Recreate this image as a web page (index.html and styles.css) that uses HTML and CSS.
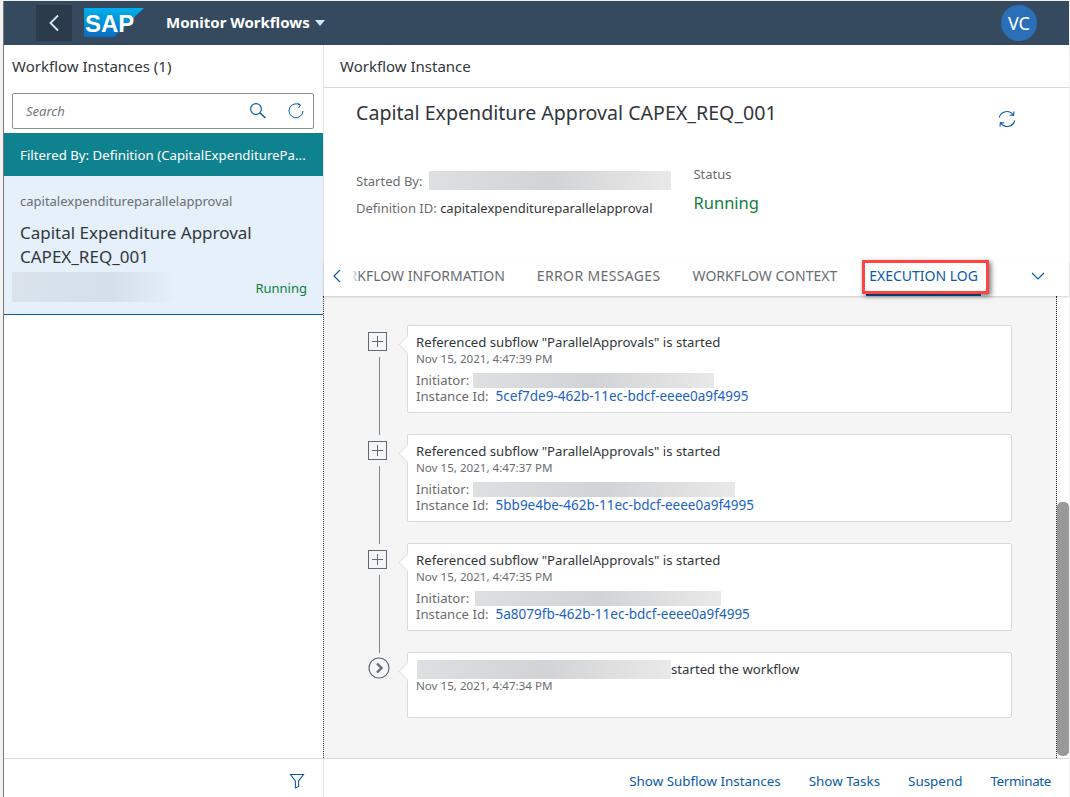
FILE: index.html
```html
<!DOCTYPE html>
<html>
<head lang="en">
    <meta charset="UTF-8">
    <title>Monitor Workflows</title>
    <link rel="stylesheet" href="styles.css">
</head>
<body>
<div id="app">
    <header class="shell">
        <div class="back">
            <svg width="12" height="18" viewBox="0 0 12 18"><path d="M10 1.5 2.5 9l7.5 7.5" fill="none" stroke="#d1e8ff" stroke-width="1.8"/></svg>
        </div>
        <svg class="logo" width="60" height="30" viewBox="0 0 60 30">
            <defs><linearGradient id="sapblue" x1="0" y1="0" x2="0" y2="1"><stop offset="0" stop-color="#00b1eb"/><stop offset="1" stop-color="#0a6cc0"/></linearGradient></defs>
            <polygon points="0,0 60,0 30,29 0,29" fill="url(#sapblue)"/>
            <text x="1" y="24" class="logo-text">SAP</text>
        </svg>
        <div class="shell-title">Monitor Workflows</div>
        <div class="caret"></div>
        <div class="avatar">VC</div>
    </header>
    <div class="main">
        <aside class="master">
            <div class="pane-title">Workflow Instances (1)</div>
            <div class="search">
                <span class="search-text">Search</span>
                <svg width="18" height="18" viewBox="0 0 18 18"><circle cx="7" cy="7" r="5.4" fill="none" stroke="#0a5ba8" stroke-width="1.2"/><path d="M11 11l5.5 5" fill="none" stroke="#0a5ba8" stroke-width="1.6"/></svg>
                <svg width="18" height="18" viewBox="0 0 18 18"><path d="M13.2 3.2A7 7 0 1 0 16 9" fill="none" stroke="#0a5ba8" stroke-width="1"/><path d="M10.5 1 13.6 3.2 11.4 6" fill="none" stroke="#0a5ba8" stroke-width="1"/></svg>
            </div>
            <div class="filter-bar"><span>Filtered By: Definition (CapitalExpenditurePa...</span></div>
            <div class="item">
                <div class="item-def">capitalexpenditureparallelapproval</div>
                <div class="item-name">Capital Expenditure Approval CAPEX_REQ_001</div>
                <div class="item-foot">
                    <div class="blur blur-item"></div>
                    <div class="running-sm">Running</div>
                </div>
            </div>
            <div class="spacer"></div>
            <div class="master-foot">
                <svg width="16" height="16" viewBox="0 0 16 16"><path d="M1.5 1.5h13L9.6 8v5.5l-3.2 1.5V8z" fill="none" stroke="#0a5ba8" stroke-width="1.1"/></svg>
            </div>
        </aside>
        <section class="detail">
            <div class="pane-title detail-title">Workflow Instance</div>
            <div class="head">
                <div class="head-top">
                    <h1>Capital Expenditure Approval CAPEX_REQ_001</h1>
                    <svg width="20" height="20" viewBox="0 0 20 20"><path d="M2.3 8.5A7.8 7.8 0 0 1 16.2 5.8M17.7 11.5A7.8 7.8 0 0 1 3.8 14.2" fill="none" stroke="#0a5ba8" stroke-width="1.1"/><path d="M17 2.4 16.6 6.4l-4-.4M3 17.6 3.4 13.6l4 .4" fill="none" stroke="#0a5ba8" stroke-width="1.1"/></svg>
                </div>
                <div class="head-info">
                    <div class="info-left">
                        <div class="info-row"><span class="info-label">Started By:</span><div class="blur blur-start"></div></div>
                        <div class="info-row info-def"><span class="info-label">Definition ID:</span> capitalexpenditureparallelapproval</div>
                    </div>
                    <div class="info-status">
                        <div class="info-label">Status</div>
                        <div class="running-lg">Running</div>
                    </div>
                </div>
            </div>
            <div class="tabs">
                <svg width="10" height="16" viewBox="0 0 10 16"><path d="M8 2 2 8l6 6" fill="none" stroke="#0a5ba8" stroke-width="1.2"/></svg>
                <div class="tab-list">
                    <div class="tab">WORKFLOW INFORMATION</div>
                    <div class="tab tab-wide">ERROR MESSAGES</div>
                    <div class="tab">WORKFLOW CONTEXT</div>
                    <div class="tab tab-on">EXECUTION LOG<div class="mark"></div></div>
                </div>
                <svg class="tab-down" width="16" height="10" viewBox="0 0 16 10"><path d="M2 2l6 6 6-6" fill="none" stroke="#0a5ba8" stroke-width="1.2"/></svg>
            </div>
            <div class="log">
                <div class="log-inner">
                    <div class="row">
                        <div class="rail">
                            <svg class="node" width="20" height="20" viewBox="0 0 20 20"><rect x="1.5" y="0.5" width="18" height="18" fill="none" stroke="#5b6b7a" stroke-width="1"/><path d="M10.5 4v11M5 9.5h11" stroke="#5b6b7a" stroke-width="1"/></svg>
                            <div class="line"></div>
                        </div>
                        <div class="card">
                            <div class="card-title">Referenced subflow "ParallelApprovals" is started</div>
                            <div class="card-date">Nov 15, 2021, 4:47:39 PM</div>
                            <div class="card-line">Initiator:<div class="blur blur-a"></div></div>
                            <div class="card-line card-id">Instance Id:<a>5cef7de9-462b-11ec-bdcf-eeee0a9f4995</a></div>
                        </div>
                    </div>
                    <div class="row">
                        <div class="rail">
                            <svg class="node" width="20" height="20" viewBox="0 0 20 20"><rect x="1.5" y="0.5" width="18" height="18" fill="none" stroke="#5b6b7a" stroke-width="1"/><path d="M10.5 4v11M5 9.5h11" stroke="#5b6b7a" stroke-width="1"/></svg>
                            <div class="line"></div>
                        </div>
                        <div class="card">
                            <div class="card-title">Referenced subflow "ParallelApprovals" is started</div>
                            <div class="card-date">Nov 15, 2021, 4:47:37 PM</div>
                            <div class="card-line">Initiator:<div class="blur blur-b"></div></div>
                            <div class="card-line card-id">Instance Id:<a>5bb9e4be-462b-11ec-bdcf-eeee0a9f4995</a></div>
                        </div>
                    </div>
                    <div class="row">
                        <div class="rail">
                            <svg class="node" width="20" height="20" viewBox="0 0 20 20"><rect x="1.5" y="0.5" width="18" height="18" fill="none" stroke="#5b6b7a" stroke-width="1"/><path d="M10.5 4v11M5 9.5h11" stroke="#5b6b7a" stroke-width="1"/></svg>
                            <div class="line"></div>
                        </div>
                        <div class="card">
                            <div class="card-title">Referenced subflow "ParallelApprovals" is started</div>
                            <div class="card-date">Nov 15, 2021, 4:47:35 PM</div>
                            <div class="card-line">Initiator:<div class="blur blur-c"></div></div>
                            <div class="card-line card-id">Instance Id:<a>5a8079fb-462b-11ec-bdcf-eeee0a9f4995</a></div>
                        </div>
                    </div>
                    <div class="row row-last">
                        <div class="rail">
                            <svg class="node node-start" width="22" height="22" viewBox="0 0 22 22"><circle cx="11" cy="11" r="10" fill="none" stroke="#5b6b7a" stroke-width="1.2"/><path d="M9 6.5l4.5 4.5L9 15.5" fill="none" stroke="#5b6b7a" stroke-width="2.4"/></svg>
                        </div>
                        <div class="card card-last">
                            <div class="card-title title-last"><div class="blur blur-d"></div>started the workflow</div>
                            <div class="card-date">Nov 15, 2021, 4:47:34 PM</div>
                        </div>
                    </div>
                </div>
                <div class="scroll"><div class="thumb"></div></div>
            </div>
            <div class="detail-foot">
                <a>Show Subflow Instances</a>
                <a>Show Tasks</a>
                <a>Suspend</a>
                <a class="foot-end">Terminate</a>
            </div>
        </section>
    </div>
</div>
</body>
</html>
```

FILE: styles.css
```css
*{
    margin: 0;
    padding: 0;
    box-sizing: border-box;
}
html,body{
    height: 100%;
    overflow: hidden;
}
body{
    background: #f2f2f2;
    font-family: "Noto Sans", "Open Sans", sans-serif;
    color: #32363a;
    padding: 1px 1px 0 3px;
}
a{
    color: #0a5ba8;
    text-decoration: none;
}
#app{
    height: 100%;
    display: flex;
    flex-direction: column;
    background: #fff;
    border-left: 1px solid #777;
}

.shell{
    height: 44px;
    background: #354a5f;
    display: flex;
    align-items: center;
    padding-left: 32px;
    flex-shrink: 0;
}
.back{
    width: 36px;
    height: 36px;
    background: #2b3b4c;
    display: flex;
    align-items: center;
    justify-content: center;
}
.logo{
    margin-left: 12px;
}
.logo-text{
    font-family: "Liberation Sans", sans-serif;
    font-weight: bold;
    font-size: 24px;
    fill: #fff;
}
.shell-title{
    margin: 0 0 3px 22px;
    color: #fff;
    font-size: 15px;
    font-weight: bold;
}
.caret{
    margin-left: 5px;
    border-left: 5.5px solid transparent;
    border-right: 5.5px solid transparent;
    border-top: 6px solid #d1e8ff;
}
.avatar{
    width: 36px;
    height: 36px;
    border-radius: 50%;
    background: #2a6fb8;
    color: #fff;
    font-size: 18px;
    text-align: center;
    line-height: 36px;
    margin-left: auto;
    margin-right: 32px;
}

.main{
    flex: 1;
    display: flex;
    min-height: 0;
}
.master{
    width: 320px;
    display: flex;
    flex-direction: column;
    flex-shrink: 0;
    border-right: 1px solid #e2e2e2;
}
.pane-title{
    height: 43px;
    line-height: 43px;
    font-size: 15px;
    padding-left: 8px;
    flex-shrink: 0;
}
.search{
    margin: 5px 9px 0 8px;
    height: 36px;
    border: 1px solid #89919a;
    border-radius: 2px;
    display: flex;
    align-items: center;
    gap: 20px;
    padding: 0 8px 0 13px;
    flex-shrink: 0;
}
.search-text{
    flex: 1;
    font-size: 13px;
    font-style: italic;
    color: #74777a;
}
.filter-bar{
    margin-top: 4px;
    height: 43px;
    background: #0f828f;
    color: #fff;
    font-size: 13.25px;
    line-height: 45px;
    padding-left: 16px;
    white-space: nowrap;
    flex-shrink: 0;
}
.item{
    height: 139px;
    background: #e5f0fa;
    border-bottom: 1px solid #0a5aa8;
    padding: 16px 16px 0;
    flex-shrink: 0;
}
.item-def{
    font-size: 13px;
    color: #6a6d70;
}
.item-name{
    margin-top: 11px;
    font-size: 17px;
    line-height: 24px;
}
.item-foot{
    display: flex;
    justify-content: space-between;
    align-items: center;
    margin: 3px 0 0 -8px;
}
.running-sm{
    padding-top: 2px;
    font-size: 13px;
    color: #107e3e;
}
.spacer{
    flex: 1;
}
.master-foot{
    height: 39px;
    border-top: 1px solid #d9d9d9;
    display: flex;
    align-items: center;
    justify-content: flex-end;
    padding: 5px 18px 0 0;
    flex-shrink: 0;
}

.blur{
    background: linear-gradient(90deg, #dedfe0, #d2d3d4 50%, #e9e9ea);
}
.blur-item{
    width: 166px;
    height: 30px;
    background: linear-gradient(90deg, #dae3ec, #d5dfe9 60%, #e5f0fa);
}
.blur-start{
    width: 242px;
    height: 19px;
    margin-left: 7px;
}
.blur-a{
    width: 241px;
    height: 15px;
    margin-left: -3px;
}
.blur-b{
    width: 262px;
    height: 15px;
    margin-left: -3px;
}
.blur-c{
    width: 246px;
    height: 15px;
    margin-left: -1px;
}
.blur-d{
    width: 254px;
    height: 19px;
    margin-left: 1px;
    flex-shrink: 0;
}

.detail{
    flex: 1;
    display: flex;
    flex-direction: column;
    min-width: 0;
}
.detail-title{
    padding-left: 16px;
    border-bottom: 1px solid #d9d9d9;
}
.head{
    height: 173px;
    padding: 12px 32px 0;
    flex-shrink: 0;
}
.head-top{
    display: flex;
    justify-content: space-between;
    padding-right: 28px;
}
.head-top svg{
    margin-top: 9px;
    margin-right: -8px;
}
h1{
    font-size: 19.6px;
    font-weight: normal;
    line-height: 26px;
}
.head-info{
    display: flex;
    margin-top: 28px;
    gap: 22px;
}
.info-left{
    padding-top: 14px;
}
.info-row{
    display: flex;
    align-items: center;
    height: 19px;
    font-size: 13px;
    white-space: pre;
}
.info-def{
    margin-top: 8px;
}
.info-label{
    color: #6a6d70;
    font-size: 13px;
}
.info-status{
    padding-top: 8px;
}
.running-lg{
    margin-top: 8px;
    font-size: 16.5px;
    color: #107e3e;
}

.tabs{
    height: 35px;
    display: flex;
    align-items: center;
    padding: 0 23px 3px 8px;
    flex-shrink: 0;
    box-shadow: 0 1px 2px rgba(0,0,0,.18);
    position: relative;
}
.tabs svg{
    margin-top: -2px;
}
.tab-list{
    width: 637px;
    margin-left: 10px;
    height: 32px;
    display: flex;
    justify-content: flex-end;
    gap: 32px;
    padding-right: 11px;
    position: relative;
    clip-path: inset(-10px -40px -10px 0);
}
.tab-list:before{
    content: "";
    position: absolute;
    left: 0;
    top: 0;
    bottom: 0;
    width: 8px;
    background: linear-gradient(90deg, #fff, rgba(255,255,255,0));
    z-index: 1;
}
.tab{
    font-size: 14px;
    line-height: 30px;
    color: #6a6d70;
    white-space: nowrap;
    flex-shrink: 0;
    position: relative;
}
.tab-wide{
    letter-spacing: .36px;
}
.tab-on{
    color: #0a5ba8;
}
.tab-on:after{
    content: "";
    position: absolute;
    left: -3px;
    right: -3px;
    bottom: -3px;
    height: 2px;
    background: #0a5ba8;
}
.mark{
    position: absolute;
    left: -7px;
    right: -11px;
    top: -1px;
    bottom: -1px;
    border: 3px solid #f44;
    box-shadow: 2px 2px 5px rgba(0,0,0,.55);
    z-index: 2;
}
.tab-down{
    margin-left: auto;
}

.log{
    flex: 1;
    min-height: 0;
    display: flex;
    background: #f5f5f5;
    border-left: 1px dotted #333;
    margin-left: -1px;
}
.log-inner{
    flex: 1;
    padding: 29px 44px 0 43px;
    border-right: 1px dotted #222;
}
.row{
    display: flex;
    height: 109px;
}
.row-last{
    height: 66px;
}
.rail{
    width: 40px;
    display: flex;
    flex-direction: column;
    align-items: flex-start;
    padding-top: 7px;
    flex-shrink: 0;
}
.node{
    flex-shrink: 0;
}
.node-start{
    margin: -2px 0 0 1px;
}
.line{
    width: 1px;
    margin: 5px 0 -1px 12px;
    flex: 1;
    background: #7c8791;
}
.card{
    flex: 1;
    height: 88px;
    background: #fff;
    border: 1px solid #d9d9d9;
    border-radius: 2px;
    padding: 7px 8px;
    position: relative;
}
.card:before{
    content: "";
    position: absolute;
    left: -7px;
    top: 12px;
    width: 12px;
    height: 12px;
    background: #fff;
    border-left: 1px solid #e2e2e2;
    border-bottom: 1px solid #e2e2e2;
    transform: rotate(45deg);
}
.card-last{
    height: 66px;
}
.card-title{
    font-size: 13.2px;
    line-height: 19px;
    position: relative;
}
.title-last{
    display: flex;
    align-items: center;
}
.card-date{
    font-size: 11.6px;
    line-height: 14px;
    color: #6a6d70;
    margin-bottom: 6px;
}
.card-line{
    display: flex;
    align-items: center;
    font-size: 13.2px;
    line-height: 16px;
    color: #6a6d70;
    gap: 7px;
}
.card-line a{
    color: #1a62c4;
    font-size: 13.5px;
}
.scroll{
    width: 12px;
    padding-top: 206px;
    background: #fff;
    flex-shrink: 0;
}
.thumb{
    height: 254px;
    background: #999;
    border-radius: 5px;
}

.detail-foot{
    height: 39px;
    border-top: 1px solid #d9d9d9;
    display: flex;
    align-items: center;
    justify-content: flex-end;
    gap: 28px;
    padding: 5px 18px 0 0;
    font-size: 13.4px;
    flex-shrink: 0;
}
.foot-end{
    letter-spacing: -.35px;
}
```
